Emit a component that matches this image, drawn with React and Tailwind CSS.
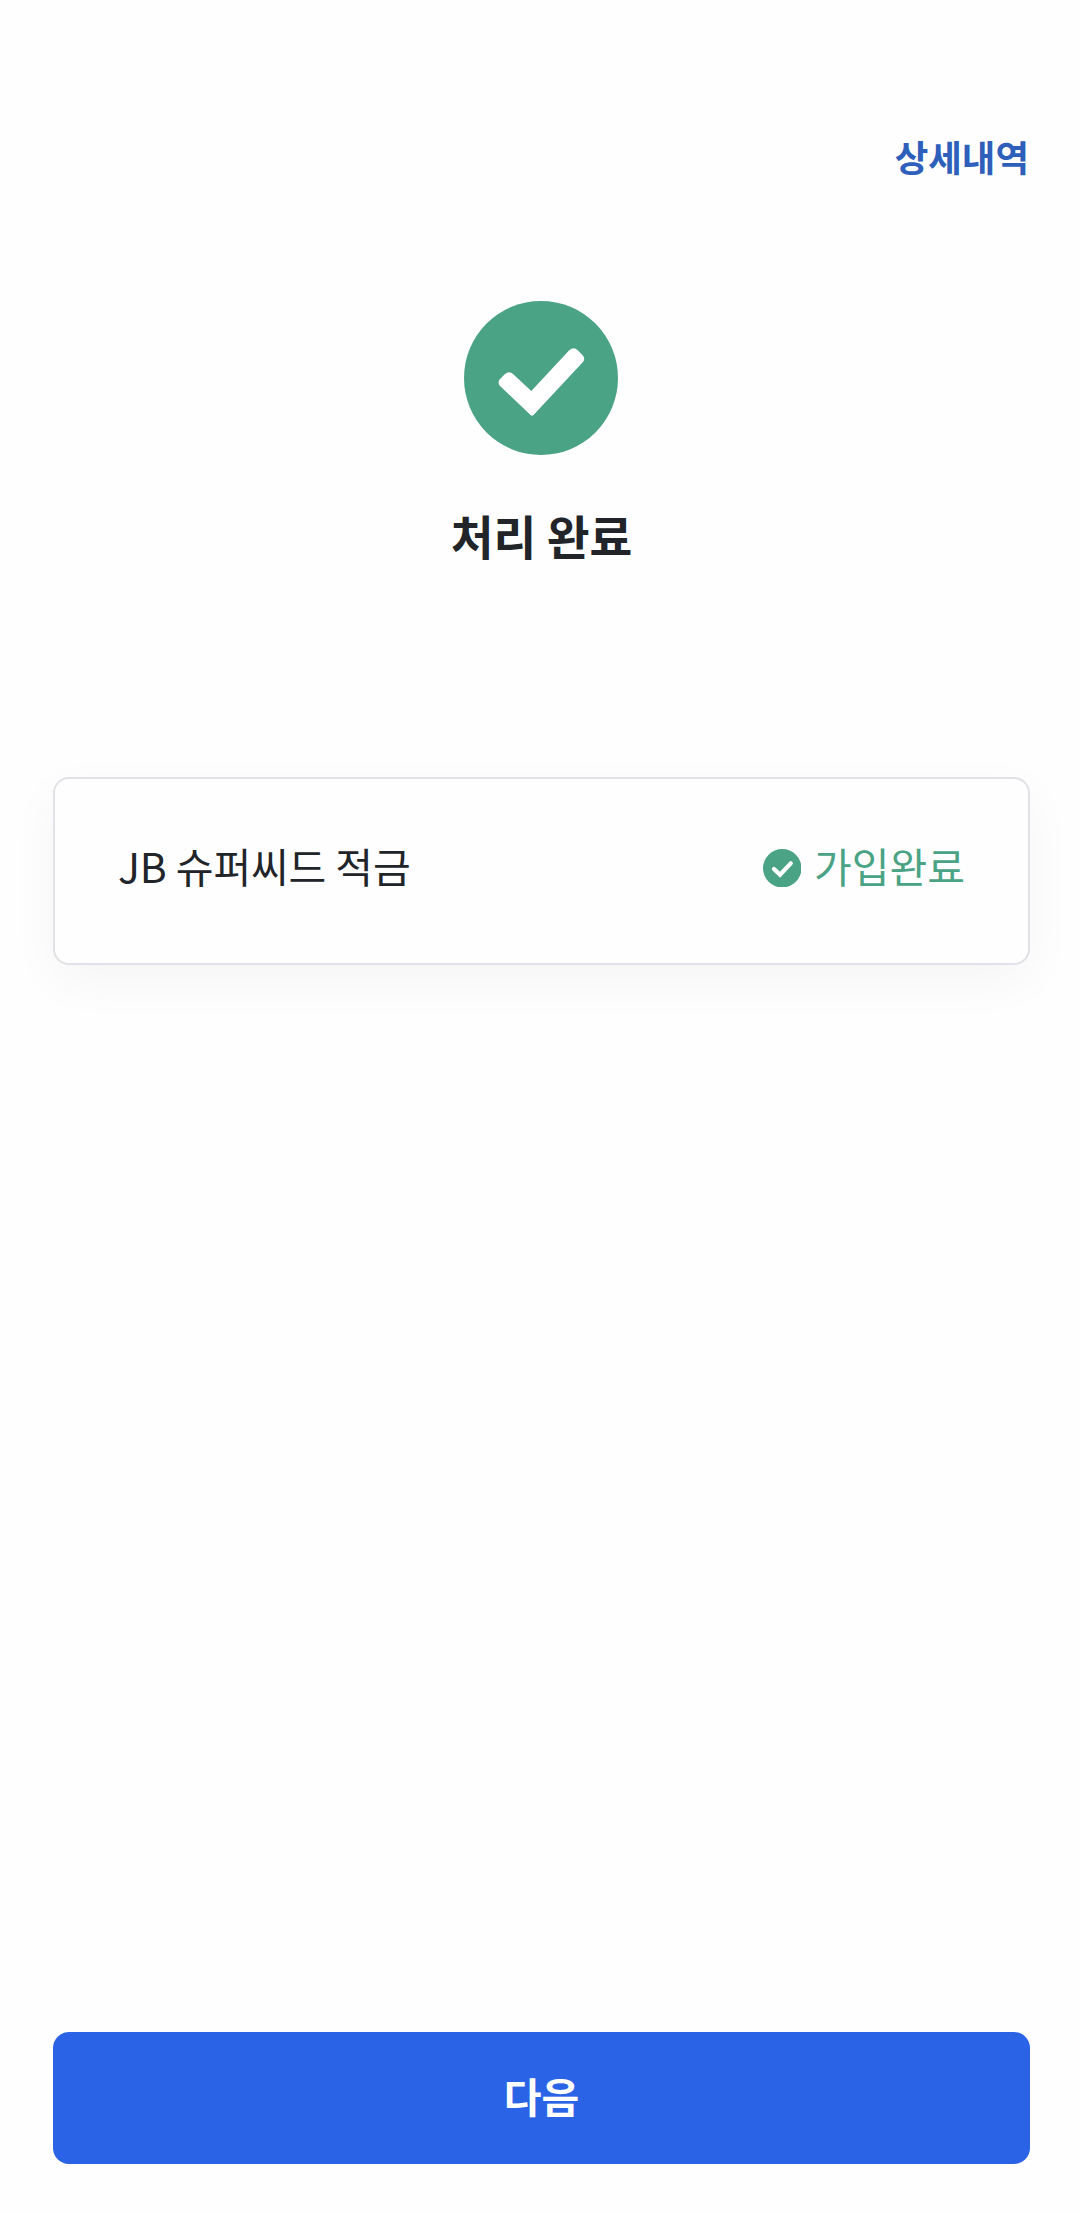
function CompleteIcon() {
  return (
    <svg className="mr-px size-[154px]" viewBox="0 0 154 154" aria-hidden="true">
      <circle cx="77" cy="77" r="77" fill="#4aa385" />
      <path d="M36 85Q33 81.500 36 78L41 73Q45 69.500 49 73L67.300 90L105 49.500Q109.500 45.500 113.500 49L118.500 54Q122 58 118.500 61.500L69.500 114Q68 115.500 66.500 114Z" fill="white" />
    </svg>
  );
}

function StatusIcon() {
  return (
    <svg className="mt-[6px] size-[38.5px]" viewBox="0 0 154 154" aria-hidden="true">
      <circle cx="77" cy="77" r="77" fill="#4aa385" />
      <path d="M44 80L68 103L111 57.500" fill="none" stroke="white" strokeWidth="17" strokeLinecap="round" strokeLinejoin="miter" />
    </svg>
  );
}

export default function App() {
  return (
    <main className="flex h-[2213px] w-[1080px] flex-col bg-[#fefefe] pr-[50px] pl-[53px] font-['Noto_Sans_CJK_KR',sans-serif] text-[#212529]">
      <header className="mt-[130px] flex h-[54px] justify-end pr-px text-[36.5px] leading-[54px] font-bold text-[#2d5fbb]">상세내역</header>
      <section className="mt-[117px] flex flex-col items-center">
        <CompleteIcon />
        <h1 className="mt-[45px] text-[46.5px] leading-[70px] font-bold">처리 완료</h1>
      </section>
      <section className="mt-[207px] flex h-[188px] items-start justify-between rounded-[16px] border-2 border-[#e1e2e5] bg-[#fefefe] px-[63px] pt-[54px] text-[41px] leading-[64px] shadow-[0_16px_50px_rgba(0,0,0,0.04)]">
        <span className="tracking-[-0.1px]">JB 슈퍼씨드 적금</span>
        <span className="flex items-center gap-[13px] text-[#4aa385]">
          <StatusIcon />가입완료
        </span>
      </section>
      <button className="mt-auto mb-[49px] h-[132px] shrink-0 rounded-[16px] bg-[#2a63e5] pb-[5px] text-[41px] font-bold text-white">다음</button>
    </main>
  );
}
